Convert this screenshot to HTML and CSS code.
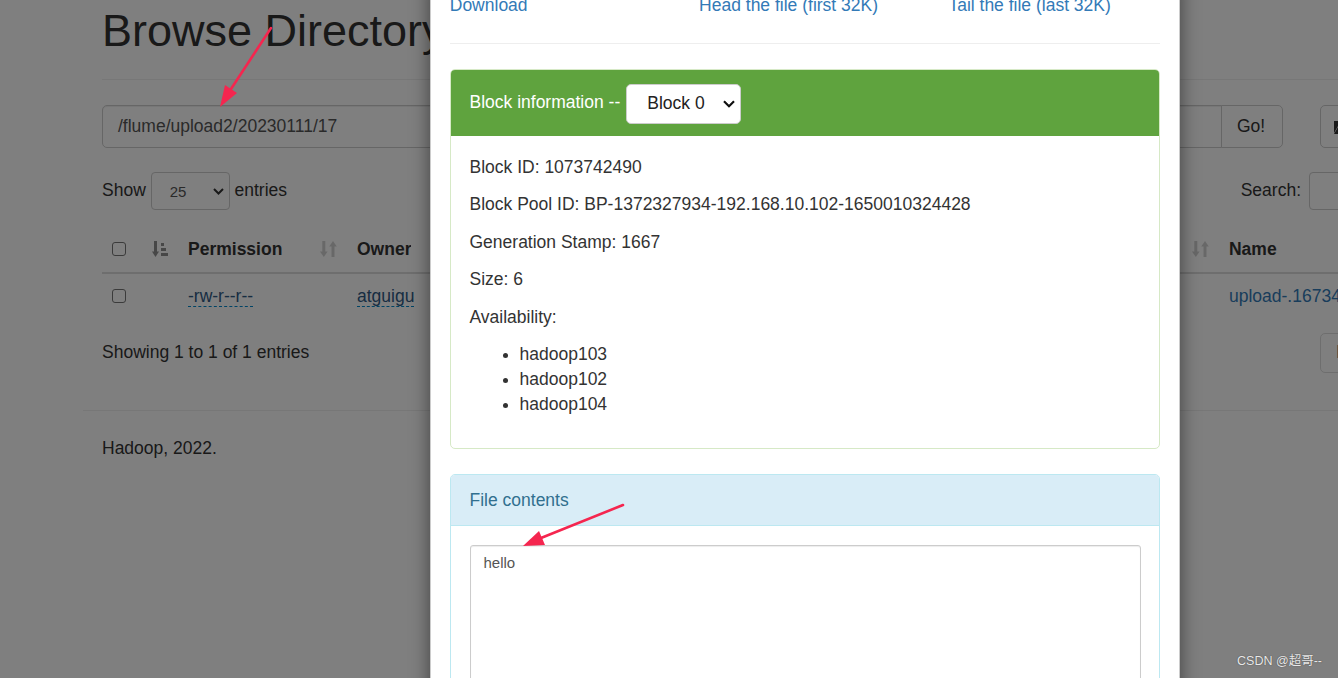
FILE: index.html
```html
<!DOCTYPE html>
<html>
<head>
<meta charset="utf-8">
<title>Browsing HDFS</title>
<link rel="stylesheet" href="styles.css">
</head>
<body>
<div class="container">
  <div class="page-header"><h1>Browse Directory</h1></div>

  <div class="nav-row">
    <div class="input-group">
      <div class="form-control path">/flume/upload2/20230111/17</div>
      <div class="btn go">Go!</div>
    </div>
    <div class="btn icon-btn">
      <svg width="18" height="16" viewBox="0 0 18 16"><path d="M1 2h5l2 2h7v3H5L1 14z" fill="#333"/><path d="M5 8h13l-4 7H1z" fill="#333"/></svg>
    </div>
  </div>

  <div class="dt-top">
    <div class="length">Show <span class="sel-sm"><span>25</span><svg width="11" height="7" viewBox="0 0 11 7"><polyline points="1,1 5.5,5.5 10,1" fill="none" stroke="#333" stroke-width="2"/></svg></span> entries</div>
    <div class="search">Search:<span class="search-input"></span></div>
  </div>

  <table class="listing">
    <colgroup>
      <col class="c-check"><col class="c-perm"><col class="c-mid"><col class="c-mid"><col class="c-mid"><col class="c-mid"><col class="c-mid"><col class="c-mid"><col class="c-name">
    </colgroup>
    <thead>
      <tr>
        <th><div class="th-in"><span class="cb"></span><svg class="sort active" width="16" height="18" viewBox="0 0 16 18"><rect x="2" y="1" width="3" height="11"/><polygon points="0,11.5 7,11.5 3.5,17"/><rect x="9" y="3" width="3" height="3"/><rect x="9" y="8" width="5" height="3"/><rect x="9" y="13" width="7" height="3"/></svg></div></th>
        <th><div class="th-in"><span class="th-t">Permission</span><svg class="sort" width="17" height="18" viewBox="0 0 17 18"><rect x="2.3" y="1" width="3" height="11"/><polygon points="0,11.5 7.6,11.5 3.8,17"/><rect x="11.5" y="6" width="3" height="11"/><polygon points="9.2,6.5 16.8,6.5 13,1"/></svg></div></th>
        <th><div class="th-in"><span class="th-t">Owner</span><svg class="sort" width="17" height="18" viewBox="0 0 17 18"><rect x="2.3" y="1" width="3" height="11"/><polygon points="0,11.5 7.6,11.5 3.8,17"/><rect x="11.5" y="6" width="3" height="11"/><polygon points="9.2,6.5 16.8,6.5 13,1"/></svg></div></th>
        <th><div class="th-in"><span class="th-t">Group</span><svg class="sort" width="17" height="18" viewBox="0 0 17 18"><rect x="2.3" y="1" width="3" height="11"/><polygon points="0,11.5 7.6,11.5 3.8,17"/><rect x="11.5" y="6" width="3" height="11"/><polygon points="9.2,6.5 16.8,6.5 13,1"/></svg></div></th>
        <th><div class="th-in"><span class="th-t">Size</span><svg class="sort" width="17" height="18" viewBox="0 0 17 18"><rect x="2.3" y="1" width="3" height="11"/><polygon points="0,11.5 7.6,11.5 3.8,17"/><rect x="11.5" y="6" width="3" height="11"/><polygon points="9.2,6.5 16.8,6.5 13,1"/></svg></div></th>
        <th><div class="th-in"><span class="th-t">Modified</span><svg class="sort" width="17" height="18" viewBox="0 0 17 18"><rect x="2.3" y="1" width="3" height="11"/><polygon points="0,11.5 7.6,11.5 3.8,17"/><rect x="11.5" y="6" width="3" height="11"/><polygon points="9.2,6.5 16.8,6.5 13,1"/></svg></div></th>
        <th><div class="th-in"><span class="th-t">Replication</span><svg class="sort" width="17" height="18" viewBox="0 0 17 18"><rect x="2.3" y="1" width="3" height="11"/><polygon points="0,11.5 7.6,11.5 3.8,17"/><rect x="11.5" y="6" width="3" height="11"/><polygon points="9.2,6.5 16.8,6.5 13,1"/></svg></div></th>
        <th><div class="th-in"><span class="th-t">Block Size</span><svg class="sort" width="17" height="18" viewBox="0 0 17 18"><rect x="2.3" y="1" width="3" height="11"/><polygon points="0,11.5 7.6,11.5 3.8,17"/><rect x="11.5" y="6" width="3" height="11"/><polygon points="9.2,6.5 16.8,6.5 13,1"/></svg></div></th>
        <th><div class="th-in"><span class="th-t">Name</span><svg class="sort" width="17" height="18" viewBox="0 0 17 18"><rect x="2.3" y="1" width="3" height="11"/><polygon points="0,11.5 7.6,11.5 3.8,17"/><rect x="11.5" y="6" width="3" height="11"/><polygon points="9.2,6.5 16.8,6.5 13,1"/></svg></div></th>
      </tr>
    </thead>
    <tbody>
      <tr>
        <td><span class="cb"></span></td>
        <td><span class="editable">-rw-r--r--</span></td>
        <td><span class="editable">atguigu</span></td>
        <td><span class="editable">group</span></td>
        <td>6 B</td>
        <td>Jan 11</td>
        <td><span class="editable">3</span></td>
        <td>128 MB</td>
        <td><a class="link">upload-.1673428980521</a></td>
      </tr>
    </tbody>
  </table>

  <div class="dt-bottom">
    <div class="info">Showing 1 to 1 of 1 entries</div>
    <div class="pager"><span class="page-btn">Previous</span><span class="page-btn cur">1</span><span class="page-btn">Next</span></div>
  </div>

  <div class="footer-row">
    <hr>
    <p>Hadoop, 2022.</p>
  </div>
</div>

<div class="backdrop"></div>

<div class="modal">
  <div class="modal-body">
    <div class="links">
      <a class="link">Download</a>
      <a class="link">Head the file (first 32K)</a>
      <a class="link">Tail the file (last 32K)</a>
    </div>
    <hr class="sep">
    <div class="panel panel-success">
      <div class="panel-heading">
        <span>Block information --</span>
        <span class="sel-block"><span>Block 0</span><svg width="12" height="8" viewBox="0 0 12 8"><polyline points="1,1.2 6,6.2 11,1.2" fill="none" stroke="#111" stroke-width="2.2"/></svg></span>
      </div>
      <div class="panel-body">
        <p>Block ID: 1073742490</p>
        <p>Block Pool ID: BP-1372327934-192.168.10.102-1650010324428</p>
        <p>Generation Stamp: 1667</p>
        <p>Size: 6</p>
        <p>Availability:</p>
        <ul>
          <li>hadoop103</li>
          <li>hadoop102</li>
          <li>hadoop104</li>
        </ul>
      </div>
    </div>
    <div class="panel panel-info">
      <div class="panel-heading">File contents</div>
      <div class="panel-body">
        <textarea class="contents" readonly>hello</textarea>
      </div>
    </div>
  </div>
</div>

<svg class="annot" width="1338" height="678" viewBox="0 0 1338 678">
  <line x1="271" y1="28" x2="231" y2="89" stroke="#f5264f" stroke-width="2.6" stroke-linecap="round"/>
  <polygon points="220,107 237,93 225,85" fill="#f5264f"/>
  <line x1="623" y1="505" x2="541" y2="538" stroke="#f5264f" stroke-width="2.6" stroke-linecap="round"/>
  <polygon points="523,546 545,545 539,531" fill="#f5264f"/>
</svg>

<div class="watermark">CSDN @超哥--</div>
</body>
</html>
```

FILE: styles.css
```css
html, body {
  margin: 0;
  padding: 0;
}
body {
  width: 1338px;
  height: 678px;
  overflow: hidden;
  position: relative;
  background: #fff;
  font-family: "Liberation Sans", Arial, sans-serif;
  font-size: 17.5px;
  line-height: 25px;
  color: #333;
}

.container {
  margin-left: 83.25px;
  padding: 0 18.75px;
  width: 1407px;
}

.page-header {
  padding-bottom: 11.25px;
  border-bottom: 1px solid #eee;
  margin-bottom: 25px;
}
.page-header h1 {
  margin: 6px 0 12.5px;
  font-size: 45px;
  line-height: 49.5px;
  font-weight: normal;
  color: #333;
}

.nav-row {
  display: flex;
  align-items: center;
}
.input-group {
  display: flex;
  width: 1181px;
}
.form-control {
  box-sizing: border-box;
  height: 42.5px;
  border: 1px solid #ccc;
  box-shadow: inset 0 1px 1px rgba(0,0,0,.075);
  display: flex;
  align-items: center;
  color: #555;
}
.path {
  flex: 1;
  padding: 0 15px;
  border-radius: 5px 0 0 5px;
}
.btn {
  box-sizing: border-box;
  height: 42.5px;
  border: 1px solid #ccc;
  background: #fff;
  display: flex;
  align-items: center;
  padding: 0 15px;
  color: #333;
}
.go {
  margin-left: -1px;
  border-radius: 0 5px 5px 0;
  width: 62px;
}
.icon-btn {
  margin-left: 37px;
  border-radius: 5px;
  padding-left: 12px;
}

.dt-top {
  margin-top: 24.5px;
  height: 37.5px;
  display: flex;
  align-items: center;
  justify-content: space-between;
}
.length, .search {
  display: flex;
  align-items: center;
  white-space: pre;
  margin-top: -2px;
}
.sel-sm {
  box-sizing: border-box;
  width: 79px;
  height: 37.5px;
  border: 1px solid #ccc;
  border-radius: 4px;
  display: flex;
  align-items: center;
  justify-content: space-between;
  padding: 0 5px 0 18px;
  font-size: 15px;
  color: #555;
  margin-top: 2px;
}
.search-input {
  box-sizing: border-box;
  width: 200px;
  height: 37.5px;
  margin-left: 8px;
  border: 1px solid #ccc;
  border-radius: 4px;
  margin-top: 2px;
}

.listing {
  margin-top: 17px;
  width: 1407px;
  table-layout: fixed;
  border-collapse: collapse;
}
.c-check { width: 76px; }
.c-perm { width: 169px; }
.c-mid { width: 145.33px; }
.c-name { width: 290px; }
.listing th {
  text-align: left;
  padding: 10px;
  line-height: 25px;
  font-weight: bold;
  border-bottom: 2px solid #ddd;
  white-space: nowrap;
  overflow: hidden;
}
.th-in {
  display: flex;
  align-items: center;
  justify-content: space-between;
}
.th-t {
  overflow: hidden;
  min-width: 0;
}
.sort {
  fill: #333;
  opacity: 0.22;
  flex: none;
}
.sort.active {
  opacity: 0.55;
}
.listing td {
  padding: 10px;
  line-height: 25px;
  border-top: 1px solid #ddd;
  white-space: nowrap;
  overflow: hidden;
}
.cb {
  display: inline-block;
  box-sizing: border-box;
  width: 14px;
  height: 14px;
  border: 1px solid #767676;
  border-radius: 3px;
  background: #fff;
  vertical-align: -1px;
}
.editable {
  color: #2f5a85;
  border-bottom: 1px dashed #0088cc;
}
.link {
  color: #337ab7;
  text-decoration: none;
}

.dt-bottom {
  margin-top: 14px;
  display: flex;
  align-items: center;
}
.info {
  width: 1218px;
  flex: none;
}
.pager {
  display: flex;
}
.page-btn {
  box-sizing: border-box;
  height: 40px;
  padding: 6.5px 15px;
  border: 1px solid #ddd;
  margin-left: -1px;
  color: #777;
}
.page-btn:first-child {
  margin-left: 0;
  border-radius: 5px 0 0 5px;
}
.page-btn.cur {
  background: #337ab7;
  border-color: #337ab7;
  color: #fff;
}

.footer-row {
  margin-top: 37px;
}
.footer-row hr {
  margin: 0 0 0 -18.75px;
  border: 0;
  border-top: 1px solid #eee;
}
.footer-row p {
  margin: 25px 0;
}

.backdrop {
  position: absolute;
  inset: 0;
  background: rgba(0,0,0,.5);
}

.modal {
  position: absolute;
  left: 430px;
  top: -25.5px;
  width: 750px;
  height: 760px;
  box-sizing: border-box;
  background: #fff;
  border: 1px solid rgba(0,0,0,.2);
  border-radius: 7px;
  box-shadow: 0 6px 19px rgba(0,0,0,.5);
}
.modal-body {
  padding: 18.75px;
}
.links {
  display: grid;
  grid-template-columns: repeat(3, 1fr);
  margin: -1.5px -18.75px 0;
}
.links .link {
  padding: 0 18.75px;
}
.sep {
  margin: 25px 0;
  border: 0;
  border-top: 1px solid #eee;
}

.panel {
  border: 1px solid #ddd;
  border-radius: 5px;
  margin-bottom: 25px;
  overflow: hidden;
}
.panel-heading {
  padding: 12.5px 18.75px;
}
.panel-body {
  padding: 18.75px;
}
.panel-success {
  border-color: #d6e9c6;
}
.panel-success .panel-heading {
  background: #5fa33e;
  color: #fff;
  display: flex;
  align-items: center;
  padding-top: 12px;
  padding-bottom: 12px;
}
.sel-block {
  box-sizing: border-box;
  margin-left: 6px;
  width: 115px;
  height: 40px;
  background: #fff;
  border: 1px solid #ccc;
  border-radius: 5px;
  display: flex;
  align-items: center;
  justify-content: space-between;
  padding: 0 5px 0 20px;
  color: #222;
  margin-top: 2px;
}
.panel-body p {
  margin: 0 0 12.5px;
}
.panel-body ul {
  margin: 0 0 12.5px;
  padding-left: 50px;
}
.panel-info {
  border-color: #bce8f1;
}
.panel-info .panel-heading {
  background: #d9edf7;
  color: #31708f;
  border-bottom: 1px solid #bce8f1;
}
.contents {
  display: block;
  box-sizing: border-box;
  width: 100%;
  height: 220px;
  margin: 0;
  padding: 6px 13px;
  border: 1px solid #ccc;
  border-radius: 3px;
  box-shadow: inset 0 1px 1px rgba(0,0,0,.075);
  font-family: "Liberation Sans", Arial, sans-serif;
  font-size: 15px;
  line-height: 21px;
  color: #555;
  resize: none;
  outline: none;
}

.annot {
  position: absolute;
  left: 0;
  top: 0;
  pointer-events: none;
}

.watermark {
  position: absolute;
  right: 16px;
  bottom: 9px;
  font-family: "Liberation Sans", "Noto Sans CJK SC", sans-serif;
  font-size: 12.5px;
  line-height: 16px;
  color: #e8e8e8;
  text-shadow: 0 0 1px #555, 0 0 1px #555;
}
```
